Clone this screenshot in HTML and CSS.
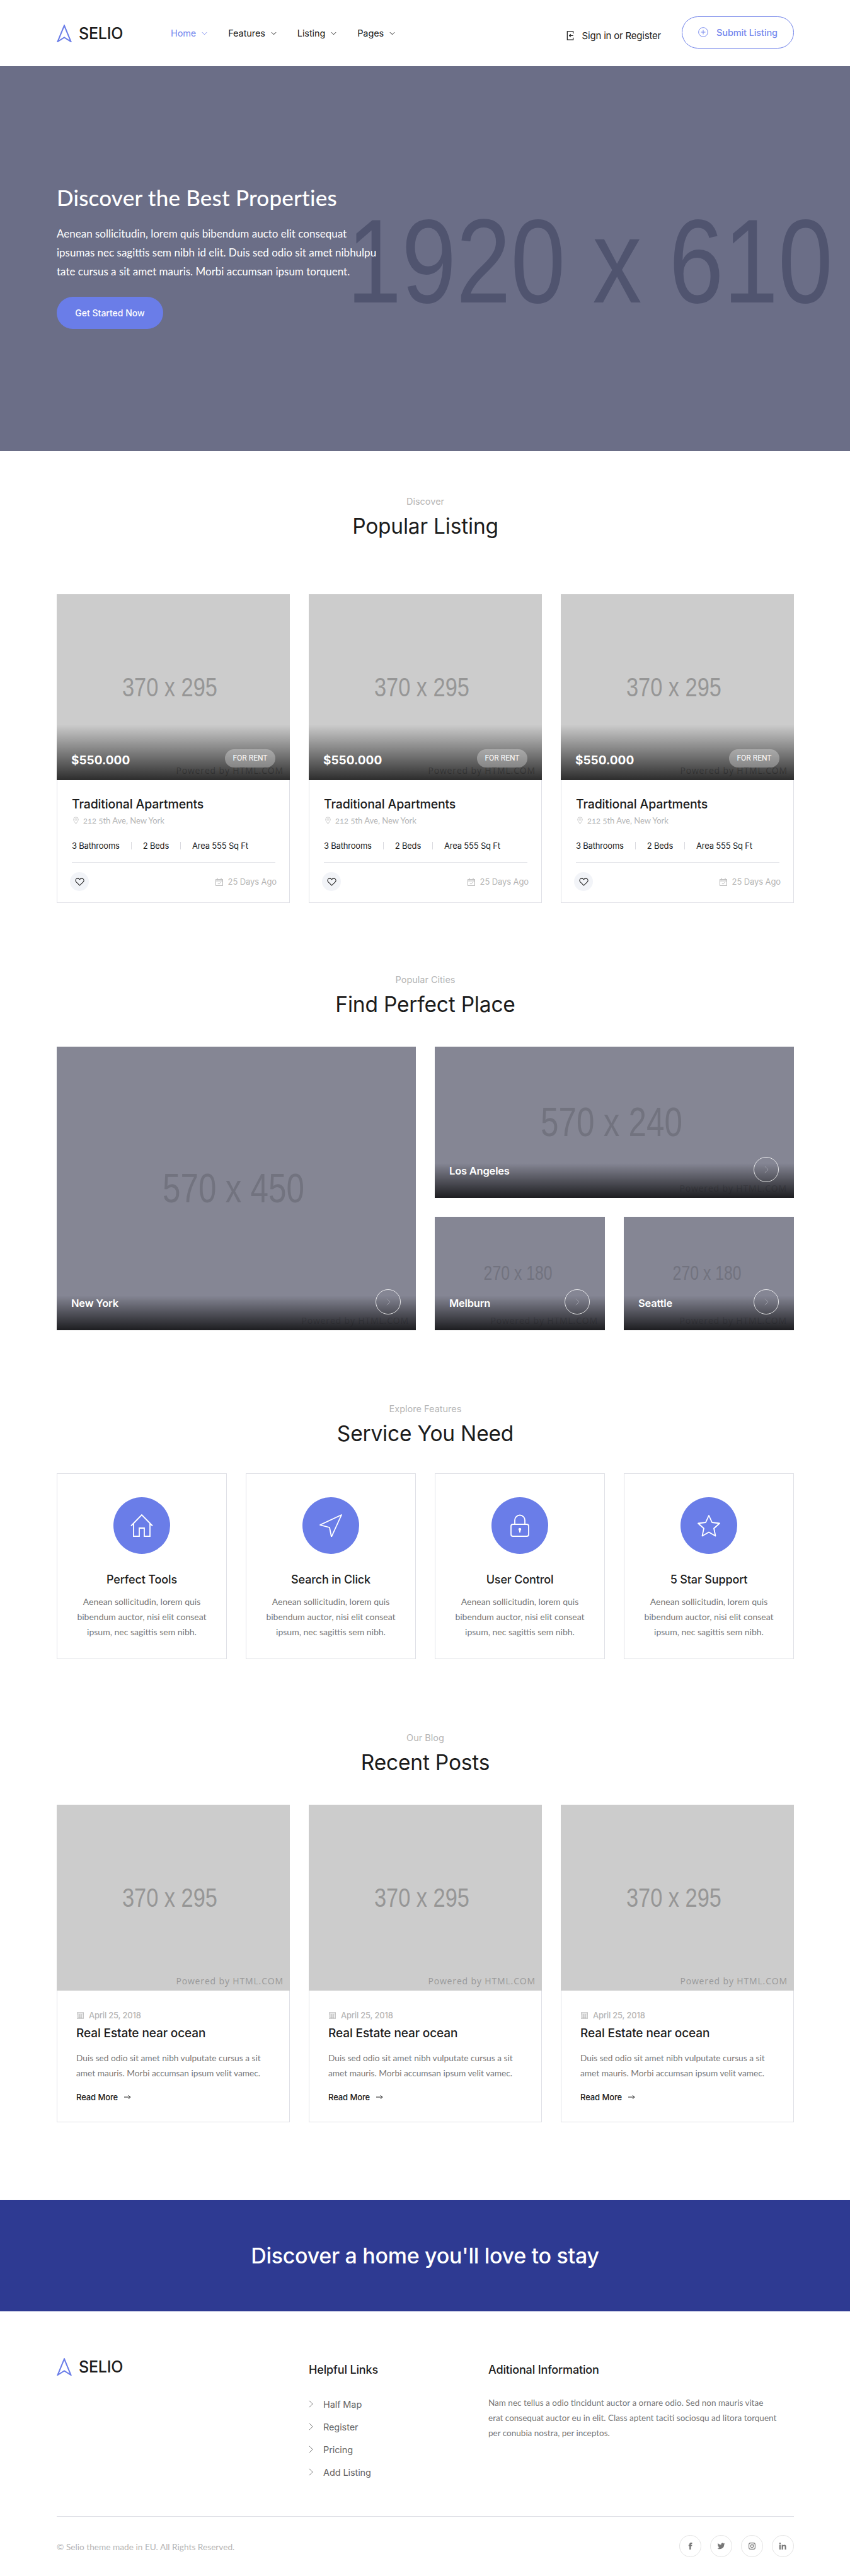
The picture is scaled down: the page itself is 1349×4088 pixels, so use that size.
FILE: index.html
```html
<!DOCTYPE html>
<html lang="en">
<head>
<meta charset="utf-8">
<title>Selio</title>
<link rel="stylesheet" href="styles.css">
</head>
<body>
<svg class="defs" width="0" height="0" aria-hidden="true">
  <symbol id="logo" viewBox="0 0 24 28"><path d="M12 1.500 L22.500 27 L12 20.500 L1.500 27 Z" fill="none" stroke="#6a7de8" stroke-width="2" stroke-linejoin="miter"/></symbol>
  <symbol id="down" viewBox="0 0 10 6"><path d="M1 1l4 4 4-4" fill="none" stroke="currentColor" stroke-width="1.100"/></symbol>
  <symbol id="right" viewBox="0 0 8 14"><path d="M1 1l6 6-6 6" fill="none" stroke="currentColor" stroke-width="1"/></symbol>
  <symbol id="pin" viewBox="0 0 12 16"><path d="M6 15C3 11 1 8.500 1 6a5 5 0 0 1 10 0c0 2.500-2 5-5 9z" fill="none" stroke="currentColor"/><circle cx="6" cy="6" r="1.800" fill="none" stroke="currentColor"/></symbol>
  <symbol id="heart" viewBox="0 0 16 14"><path d="M8 13L2 7.200C.3 5.500.6 3 2.300 1.800 4 .6 6.500 1 8 3c1.500-2 4-2.400 5.700-1.200C15.400 3 15.700 5.500 14 7.200z" fill="none" stroke="#1c1c1c" stroke-width="1.100"/></symbol>
  <symbol id="cal" viewBox="0 0 12 13"><path d="M.5 2.500h11v10H.5zM.5 5h11M3 .5v3M9 .5v3M3.800 8.500l1.600 1.600 3-3" fill="none" stroke="currentColor"/></symbol>
  <symbol id="cal2" viewBox="0 0 11 12"><path d="M.5 1.500h10v10H.5zM.5 4h10M2 6h7M2 7.700h7M2 9.400h7M4 4v7M7 4v7" fill="none" stroke="currentColor" stroke-width=".8"/></symbol>
</svg>

<header class="header">
  <a class="logo"><svg class="logo-mark"><use href="#logo"/></svg><span>SELIO</span></a>
  <nav class="nav">
    <a class="nav-item active">Home <svg class="caret"><use href="#down"/></svg></a>
    <a class="nav-item">Features <svg class="caret"><use href="#down"/></svg></a>
    <a class="nav-item">Listing <svg class="caret"><use href="#down"/></svg></a>
    <a class="nav-item">Pages <svg class="caret"><use href="#down"/></svg></a>
  </nav>
  <div class="header-right">
    <a class="signin">
      <svg class="signin-icon" viewBox="0 0 12 16"><path d="M11 4.500V1H1v14h10v-3.500M11 8H4.500M7 5.500L4.500 8 7 10.500" fill="none" stroke="#1c1c1c" stroke-width="1.300"/></svg>
      Sign in or Register
    </a>
    <a class="submit">
      <svg class="submit-icon" viewBox="0 0 16 16"><circle cx="8" cy="8" r="7.300" fill="none" stroke="currentColor"/><path d="M8 4.500v7M4.500 8h7" stroke="currentColor"/></svg>
      Submit Listing
    </a>
  </div>
</header>

<section class="hero">
  <span class="ph hero-ph">1920 x 610</span>
  <div class="hero-copy">
    <h1>Discover the Best Properties</h1>
    <p>Aenean sollicitudin, lorem quis bibendum aucto elit consequat<br>ipsumas nec sagittis sem nibh id elit. Duis sed odio sit amet nibhulpu<br>tate cursus a sit amet mauris. Morbi accumsan ipsum torquent.</p>
    <a class="hero-btn">Get Started Now</a>
  </div>
</section>

<section class="section s-listing">
  <div class="heading h-listing"><span>Discover</span><h2>Popular Listing</h2></div>
  <div class="three">
    <article class="card">
      <div class="pic"><span class="ph ph-370">370 x 295</span><span class="mark">Powered by HTML.COM</span><div class="shade"></div>
        <strong class="price">$550.000</strong><span class="badge">FOR RENT</span></div>
      <div class="card-body">
        <h3>Traditional Apartments</h3>
        <p class="addr"><svg class="pin"><use href="#pin"/></svg>212 5th Ave, New York</p>
        <ul class="specs"><li>3 Bathrooms</li><li>2 Beds</li><li>Area 555 Sq Ft</li></ul>
        <div class="card-foot"><span class="like"><svg class="heart"><use href="#heart"/></svg></span><span class="ago"><svg class="cal"><use href="#cal"/></svg>25 Days Ago</span></div>
      </div>
    </article>
    <article class="card">
      <div class="pic"><span class="ph ph-370">370 x 295</span><span class="mark">Powered by HTML.COM</span><div class="shade"></div>
        <strong class="price">$550.000</strong><span class="badge">FOR RENT</span></div>
      <div class="card-body">
        <h3>Traditional Apartments</h3>
        <p class="addr"><svg class="pin"><use href="#pin"/></svg>212 5th Ave, New York</p>
        <ul class="specs"><li>3 Bathrooms</li><li>2 Beds</li><li>Area 555 Sq Ft</li></ul>
        <div class="card-foot"><span class="like"><svg class="heart"><use href="#heart"/></svg></span><span class="ago"><svg class="cal"><use href="#cal"/></svg>25 Days Ago</span></div>
      </div>
    </article>
    <article class="card">
      <div class="pic"><span class="ph ph-370">370 x 295</span><span class="mark">Powered by HTML.COM</span><div class="shade"></div>
        <strong class="price">$550.000</strong><span class="badge">FOR RENT</span></div>
      <div class="card-body">
        <h3>Traditional Apartments</h3>
        <p class="addr"><svg class="pin"><use href="#pin"/></svg>212 5th Ave, New York</p>
        <ul class="specs"><li>3 Bathrooms</li><li>2 Beds</li><li>Area 555 Sq Ft</li></ul>
        <div class="card-foot"><span class="like"><svg class="heart"><use href="#heart"/></svg></span><span class="ago"><svg class="cal"><use href="#cal"/></svg>25 Days Ago</span></div>
      </div>
    </article>
  </div>
</section>

<section class="section s-cities">
  <div class="heading h-cities"><span>Popular Cities</span><h2>Find Perfect Place</h2></div>
  <div class="cities">
    <a class="city city-big"><span class="ph ph-570">570 x 450</span><span class="mark mark-city">Powered by HTML.COM</span><div class="shade shade-city"></div><strong>New York</strong><i class="go"><svg class="go-icon"><use href="#right"/></svg></i></a>
    <div class="cities-right">
      <a class="city city-wide"><span class="ph ph-570">570 x 240</span><span class="mark mark-city">Powered by HTML.COM</span><div class="shade shade-city"></div><strong>Los Angeles</strong><i class="go"><svg class="go-icon"><use href="#right"/></svg></i></a>
      <div class="cities-small">
        <a class="city city-small"><span class="ph ph-270">270 x 180</span><span class="mark mark-city">Powered by HTML.COM</span><div class="shade shade-city"></div><strong>Melburn</strong><i class="go"><svg class="go-icon"><use href="#right"/></svg></i></a>
        <a class="city city-small"><span class="ph ph-270">270 x 180</span><span class="mark mark-city">Powered by HTML.COM</span><div class="shade shade-city"></div><strong>Seattle</strong><i class="go"><svg class="go-icon"><use href="#right"/></svg></i></a>
      </div>
    </div>
  </div>
</section>

<section class="section s-services">
  <div class="heading h-services"><span>Explore Features</span><h2>Service You Need</h2></div>
  <div class="four">
    <article class="service">
      <div class="service-icon"><svg viewBox="0 0 36 36"><path d="M1 18.500L18 1l17 17.500M5 15v20h9V22h8v13h9V15" fill="none" stroke="#fff" stroke-width="1.800"/></svg></div>
      <h3>Perfect Tools</h3>
      <p>Aenean sollicitudin, lorem quis bibendum auctor, nisi elit conseat ipsum, nec sagittis sem nibh.</p>
    </article>
    <article class="service">
      <div class="service-icon"><svg viewBox="0 0 36 36"><path d="M35 1L1 17l15 4 3 15z" fill="none" stroke="#fff" stroke-width="1.800" stroke-linejoin="round"/></svg></div>
      <h3>Search in Click</h3>
      <p>Aenean sollicitudin, lorem quis bibendum auctor, nisi elit conseat ipsum, nec sagittis sem nibh.</p>
    </article>
    <article class="service">
      <div class="service-icon"><svg viewBox="0 0 36 36"><rect x="4" y="16" width="28" height="19" rx="3" fill="none" stroke="#fff" stroke-width="1.800"/><path d="M10 16V9.500a8 8 0 0 1 16 0V16" fill="none" stroke="#fff" stroke-width="1.800"/><circle cx="18" cy="24" r="2.200" fill="#fff"/><path d="M18 24v5" stroke="#fff" stroke-width="2"/></svg></div>
      <h3>User Control</h3>
      <p>Aenean sollicitudin, lorem quis bibendum auctor, nisi elit conseat ipsum, nec sagittis sem nibh.</p>
    </article>
    <article class="service">
      <div class="service-icon"><svg viewBox="0 0 36 36"><path d="M18 2l5 11 12 1.500-9 8 2.500 12L18 28.500 7.500 34.500l2.500-12-9-8L13 13z" fill="none" stroke="#fff" stroke-width="1.800" stroke-linejoin="round"/></svg></div>
      <h3>5 Star Support</h3>
      <p>Aenean sollicitudin, lorem quis bibendum auctor, nisi elit conseat ipsum, nec sagittis sem nibh.</p>
    </article>
  </div>
</section>

<section class="section s-blog">
  <div class="heading h-blog"><span>Our Blog</span><h2>Recent Posts</h2></div>
  <div class="three">
    <article class="card">
      <div class="pic"><span class="ph ph-370">370 x 295</span><span class="mark">Powered by HTML.COM</span></div>
      <div class="post-body">
        <p class="date"><svg class="cal2"><use href="#cal2"/></svg>April 25, 2018</p>
        <h3>Real Estate near ocean</h3>
        <p class="excerpt">Duis sed odio sit amet nibh vulputate cursus a sit amet mauris. Morbi accumsan ipsum velit vamec.</p>
        <a class="more">Read More <svg class="arrow" viewBox="0 0 11 8"><path d="M0 4h10M7 1l3 3-3 3" fill="none" stroke="#1c1c1c" stroke-width="1"/></svg></a>
      </div>
    </article>
    <article class="card">
      <div class="pic"><span class="ph ph-370">370 x 295</span><span class="mark">Powered by HTML.COM</span></div>
      <div class="post-body">
        <p class="date"><svg class="cal2"><use href="#cal2"/></svg>April 25, 2018</p>
        <h3>Real Estate near ocean</h3>
        <p class="excerpt">Duis sed odio sit amet nibh vulputate cursus a sit amet mauris. Morbi accumsan ipsum velit vamec.</p>
        <a class="more">Read More <svg class="arrow" viewBox="0 0 11 8"><path d="M0 4h10M7 1l3 3-3 3" fill="none" stroke="#1c1c1c" stroke-width="1"/></svg></a>
      </div>
    </article>
    <article class="card">
      <div class="pic"><span class="ph ph-370">370 x 295</span><span class="mark">Powered by HTML.COM</span></div>
      <div class="post-body">
        <p class="date"><svg class="cal2"><use href="#cal2"/></svg>April 25, 2018</p>
        <h3>Real Estate near ocean</h3>
        <p class="excerpt">Duis sed odio sit amet nibh vulputate cursus a sit amet mauris. Morbi accumsan ipsum velit vamec.</p>
        <a class="more">Read More <svg class="arrow" viewBox="0 0 11 8"><path d="M0 4h10M7 1l3 3-3 3" fill="none" stroke="#1c1c1c" stroke-width="1"/></svg></a>
      </div>
    </article>
  </div>
</section>

<section class="banner"><h2>Discover a home you'll love to stay</h2></section>

<footer class="footer">
  <div class="footer-top">
    <a class="logo logo-footer"><svg class="logo-mark"><use href="#logo"/></svg><span>SELIO</span></a>
    <div class="foot-links">
      <h4>Helpful Links</h4>
      <ul>
        <li><svg class="chev"><use href="#right"/></svg>Half Map</li>
        <li><svg class="chev"><use href="#right"/></svg>Register</li>
        <li><svg class="chev"><use href="#right"/></svg>Pricing</li>
        <li><svg class="chev"><use href="#right"/></svg>Add Listing</li>
      </ul>
    </div>
    <div class="foot-info">
      <h4>Aditional Information</h4>
      <p>Nam nec tellus a odio tincidunt auctor a ornare odio. Sed non mauris vitae erat consequat auctor eu in elit. Class aptent taciti sociosqu ad litora torquent per conubia nostra, per inceptos.</p>
    </div>
  </div>
  <div class="footer-bottom">
    <p class="copy">© Selio theme made in EU. All Rights Reserved.</p>
    <div class="socials">
      <a class="social"><svg viewBox="0 0 24 24"><path d="M14 8.500V6.500c0-.9.6-1.100 1-1.100h2.500V2H14c-3 0-4.500 2-4.500 4.400v2.100H7V12h2.500v10H14V12h3l.5-3.500z"/></svg></a>
      <a class="social"><svg viewBox="0 0 24 24"><path d="M23 5c-.8.4-1.700.6-2.600.8a4.500 4.500 0 0 0 2-2.500c-.9.5-1.900.9-2.900 1.100a4.500 4.500 0 0 0-7.700 4.100A12.800 12.800 0 0 1 2.500 3.800a4.500 4.500 0 0 0 1.400 6c-.7 0-1.400-.2-2-.6v.1a4.500 4.500 0 0 0 3.600 4.400c-.7.2-1.400.2-2 .1a4.500 4.500 0 0 0 4.200 3.100A9 9 0 0 1 1 18.800a12.800 12.800 0 0 0 19.700-11.400c.9-.6 1.700-1.400 2.300-2.400z"/></svg></a>
      <a class="social"><svg viewBox="0 0 24 24"><rect x="3" y="3" width="18" height="18" rx="5" fill="none" stroke="#777" stroke-width="2"/><circle cx="12" cy="12" r="4" fill="none" stroke="#777" stroke-width="2"/><circle cx="17" cy="7" r="1.200"/></svg></a>
      <a class="social"><svg viewBox="0 0 24 24"><path d="M5.500 8.500H1.500V22h4zM3.500 2a2.200 2.200 0 1 0 0 4.400 2.200 2.200 0 0 0 0-4.400zM8.500 8.500h3.800v1.800c.6-1 2-2.200 4.100-2.200 4.100 0 5.100 2.600 5.100 6.200V22h-4v-6.800c0-1.600 0-3.600-2.200-3.600s-2.800 1.700-2.800 3.500V22h-4z"/></svg></a>
    </div>
  </div>
</footer>
</body>
</html>
```
FILE: styles.css
```css
* { box-sizing: border-box; }
html, body { margin: 0; padding: 0; }
body { background: #fff; color: #1c1c1c; font-family: "Inter", "Liberation Sans", sans-serif; font-size: 14px; overflow-x: hidden; }
h1, h2, h3, h4, p, ul { margin: 0; padding: 0; }
ul { list-style: none; }
a { color: inherit; text-decoration: none; }
.defs { position: absolute; }

/* header */
.header { height: 105px; display: flex; align-items: center; padding: 0 89px 0 90px; }
.logo { display: flex; align-items: center; gap: 11px; font-size: 25px; font-weight: 500; letter-spacing: -.2px; color: #1c1c1c; width: 181px; height: 28px; }
.logo-mark { width: 24px; height: 28px; flex: none; }
.nav { display: flex; gap: 33px; font-size: 14.500px; letter-spacing: -.1px; }
.nav-item { display: flex; align-items: center; gap: 9px; }
.active { color: #7688ee; }
.caret { width: 9px; height: 6px; }
.header-right { margin-left: auto; display: flex; align-items: center; }
.signin { display: flex; align-items: center; gap: 13px; font-size: 15px; letter-spacing: -.2px; margin: 7px 33px 0 0; }
.signin-icon { width: 12px; height: 15px; }
.submit { display: flex; align-items: center; justify-content: center; gap: 13px; width: 178px; height: 51px; border: 1px solid #6a7de8; border-radius: 26px; color: #7688ee; font-size: 14.500px; font-weight: 500; letter-spacing: -.1px; margin-top: -3px; }
.submit-icon { width: 16px; height: 16px; }

/* placeholders */
.ph { font-family: "Liberation Sans", Arial, sans-serif; white-space: nowrap; transform: scaleX(.8); }
.hero-ph { position: absolute; left: 529px; top: 214px; font-size: 190px; line-height: 1; color: #50546f; transform-origin: 120px 50%; transform: scaleX(.82); }
.ph-370 { font-size: 43px; color: #969696; margin-left: -11px; }
.ph-570 { font-size: 64px; color: #72737f; margin-left: -8px; }
.ph-270 { font-size: 31px; color: #72737f; margin-left: -6px; }

/* hero */
.hero { position: relative; height: 611px; background: #6b6e87; overflow: hidden; }
.hero-copy { position: relative; padding: 186px 0 0 90px; color: #fff; }
.hero-copy h1 { font-family: "Lato", sans-serif; font-size: 35px; line-height: 44px; font-weight: 500; letter-spacing: .2px; }
.hero-copy p { margin-top: 21px; font-family: "Lato", sans-serif; font-size: 17px; line-height: 30px; font-weight: 400; }
.hero-btn { display: flex; align-items: center; justify-content: center; margin-top: 25px; width: 169px; height: 51px; border-radius: 26px; background: #6a7de8; font-size: 14px; font-weight: 500; }

/* sections */
.section { padding-left: 90px; padding-right: 89px; }
.s-listing { padding-top: 70px; }
.s-cities { padding-top: 112px; }
.s-services { padding-top: 115px; }
.s-blog { padding-top: 115px; padding-bottom: 123px; }
.heading { text-align: center; }
.heading span { display: block; font-size: 14.500px; line-height: 20px; color: #b5b5b5; }
.heading h2 { margin-top: 9px; font-size: 33.500px; line-height: 40px; font-weight: 400; letter-spacing: -.2px; color: #1c1c1c; }
.h-listing { margin-bottom: 88px; }
.h-cities { margin-bottom: 47px; }
.h-services { margin-bottom: 43px; }
.h-blog { margin-bottom: 47px; }

/* cards */
.three { display: grid; grid-template-columns: repeat(3, 370px); gap: 30px; }
.card { border: 1px solid #dfe0e6; border-top: 0; }
.pic { position: relative; height: 295px; margin: 0 -1px; background: #ccc; display: flex; align-items: center; justify-content: center; overflow: hidden; }
.mark { position: absolute; right: 10px; bottom: 6px; font-family: "Open Sans", sans-serif; font-size: 14px; line-height: 18px; letter-spacing: .85px; color: #999; white-space: nowrap; }
.mark-city { color: #72737f; right: 11px; }
.shade { position: absolute; left: 0; right: 0; bottom: 0; height: 88px; background: linear-gradient(to bottom, rgba(0,0,0,0), rgba(0,0,0,.78)); }
.price { position: absolute; left: 23px; bottom: 18px; font-size: 19px; line-height: 26px; font-weight: 700; color: #fff; }
.badge { position: absolute; left: 267px; bottom: 20px; width: 80px; height: 29px; border-radius: 15px; background: rgba(255,255,255,.3); color: #fff; font-family: "Roboto", sans-serif; font-size: 12px; line-height: 29px; text-align: center; }
.card-body { padding: 26px 22px 18px 23px; }
.card-body h3 { font-size: 19.500px; line-height: 24px; font-weight: 500; letter-spacing: -.15px; color: #1c1c1c; }
.addr { display: flex; align-items: center; gap: 7px; margin-top: 4px; height: 20px; padding-left: 2px; font-family: "Lato", sans-serif; font-size: 13px; color: #b5b5b5; font-feature-settings: "onum"; }
.pin { width: 9px; height: 12px; color: #b5b5b5; }
.specs { display: flex; margin-top: 20px; height: 20px; align-items: center; font-size: 13px; letter-spacing: -.2px; }
.specs li { line-height: 12px; }
.specs li + li { margin-left: 18px; padding-left: 18px; border-left: 1px solid #d9d9df; }
.card-foot { display: flex; align-items: center; justify-content: space-between; margin: 16px -2px 0 -3px; padding-top: 16px; position: relative; }
.card-foot::before { content: ""; position: absolute; left: 3px; right: 2px; top: 0; border-top: 1px solid #dfe0e6; }
.like { width: 30px; height: 30px; border-radius: 50%; background: #f2f4f8; display: flex; align-items: center; justify-content: center; }
.heart { width: 15px; height: 13px; }
.ago { display: flex; align-items: center; gap: 8px; font-size: 13px; color: #b5b5b5; letter-spacing: -.1px; }
.cal { width: 12px; height: 13px; color: #b5b5b5; }

/* cities */
.cities { display: flex; gap: 30px; }
.city { position: relative; display: flex; align-items: center; justify-content: center; background: #858694; overflow: hidden; }
.city-big { width: 570px; height: 450px; }
.cities-right { display: flex; flex-direction: column; gap: 30px; width: 570px; }
.city-wide { height: 240px; }
.cities-small { display: flex; gap: 30px; }
.city-small { width: 270px; height: 180px; }
.shade-city { height: 55px; }
.city strong { position: absolute; left: 23px; bottom: 33px; font-size: 16.500px; line-height: 20px; font-weight: 600; letter-spacing: -.2px; color: #fff; }
.go { position: absolute; right: 24px; bottom: 25px; width: 40px; height: 40px; border: 1px solid rgba(255,255,255,.8); border-radius: 50%; display: flex; align-items: center; justify-content: center; color: #a2a3ad; }
.go-icon { width: 7px; height: 12px; }

/* services */
.four { display: grid; grid-template-columns: repeat(4, 270px); gap: 30px; }
.service { height: 295px; border: 1px solid #dfe0e6; padding-top: 37px; text-align: center; }
.service-icon { width: 90px; height: 90px; margin: 0 auto; border-radius: 50%; background: #6a7de8; display: flex; align-items: center; justify-content: center; }
.service-icon svg { width: 36px; height: 36px; }
.service h3 { margin-top: 29px; font-size: 18px; line-height: 24px; font-weight: 500; letter-spacing: -.15px; color: #1c1c1c; }
.service p { margin: 11px auto 0; width: 216px; font-family: "Lato", sans-serif; font-size: 14px; line-height: 24px; color: #777; }

/* posts */
.post-body { padding: 29px 24px 29px 30px; }
.date { display: flex; align-items: center; gap: 8px; height: 20px; font-size: 13px; font-weight: 500; letter-spacing: -.2px; color: #b5b5b5; }
.cal2 { width: 11px; height: 12px; color: #b5b5b5; margin-left: 1px; }
.post-body h3 { margin-top: 7px; font-size: 19px; line-height: 24px; font-weight: 500; letter-spacing: -.1px; color: #1c1c1c; }
.excerpt { margin-top: 15px; font-family: "Lato", sans-serif; font-size: 13.700px; line-height: 24px; color: #777; }
.more { display: flex; align-items: center; gap: 10px; margin-top: 16px; height: 20px; font-size: 13px; font-weight: 500; letter-spacing: -.1px; color: #1c1c1c; }
.arrow { width: 11px; height: 8px; }

/* banner */
.banner { height: 177px; background: #2e3a92; display: flex; align-items: center; justify-content: center; color: #fff; }
.banner h2 { font-size: 34px; line-height: 44px; font-weight: 500; letter-spacing: -.3px; }

/* footer */
.footer { padding: 74px 89px 0 90px; }
.footer-top { display: flex; height: 252px; border-bottom: 1px solid #dfe0e6; }
.logo-footer { width: 400px; font-size: 25px; gap: 11px; }
.foot-links { width: 285px; }
.foot-info { flex: 1; padding-right: 24px; }
.footer h4 { margin-top: 8px; font-size: 18px; line-height: 22px; font-weight: 500; letter-spacing: -.15px; color: #1c1c1c; }
.foot-links ul { margin-top: 25px; }
.foot-links li { display: flex; align-items: center; gap: 16px; height: 36px; font-size: 14.500px; letter-spacing: -.1px; color: #666; }
.chev { width: 7px; height: 14px; color: #666; }
.foot-info p { margin-top: 29px; font-family: "Lato", sans-serif; font-size: 13.500px; line-height: 24px; color: #777; }
.footer-bottom { display: flex; justify-content: space-between; padding: 29px 0 30px; }
.copy { margin-top: 10px; font-family: "Lato", sans-serif; font-size: 13.700px; line-height: 18px; color: #b5b5b5; }
.socials { display: flex; gap: 14px; }
.social { width: 35px; height: 35px; border: 1px solid #e3e3e3; border-radius: 50%; display: flex; align-items: center; justify-content: center; }
.social svg { width: 13px; height: 13px; fill: #777; }
```
